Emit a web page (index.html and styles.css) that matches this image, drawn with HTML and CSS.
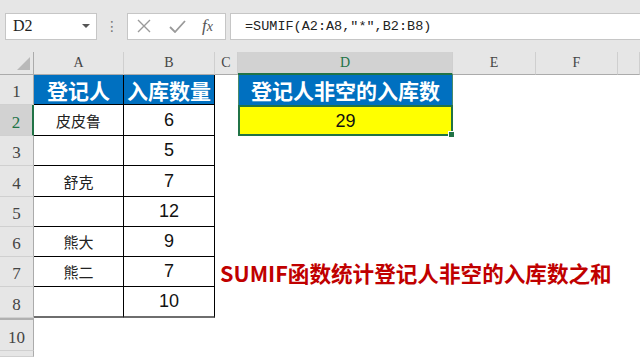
FILE: index.html
```html
<!DOCTYPE html>
<html lang="zh">
<head>
<meta charset="utf-8">
<title>SUMIF</title>
<link rel="stylesheet" href="styles.css">
</head>
<body>
<div class="toolbar">
  <div class="namebox"><span class="ref">D2</span><span class="caret"></span></div>
  <div class="grip">⋮</div>
  <div class="btns">
    <svg class="ico" width="14" height="14" viewBox="0 0 14 14"><path d="M1 1L13 13M13 1L1 13" stroke="#9a9a9a" stroke-width="1.4" fill="none"/></svg>
    <svg class="ico" width="17" height="13" viewBox="0 0 17 13"><path d="M1 7L6 12L16 1" stroke="#9a9a9a" stroke-width="1.8" fill="none"/></svg>
    <span class="fx">f<span class="x">x</span></span>
  </div>
  <div class="formula">=SUMIF(A2:A8,″*″,B2:B8)</div>
</div>
<div class="sheet">
  <div class="corner"><span class="tri"></span></div>
  <div class="ch">A</div><div class="ch">B</div><div class="ch">C</div><div class="ch sel">D</div><div class="ch">E</div><div class="ch">F</div><div class="ch"></div>

  <div class="rh">1</div>
  <div class="c t hd">登记人</div><div class="c t hd">入库数量</div><div class="c"></div><div class="c hd d1">登记人非空的入库数</div><div class="c"></div><div class="c"></div><div class="c"></div>

  <div class="rh rsel">2</div>
  <div class="c t">皮皮鲁</div><div class="c t n">6</div><div class="c"></div><div class="c n d2">29<span class="handle"></span></div><div class="c"></div><div class="c"></div><div class="c"></div>

  <div class="rh">3</div>
  <div class="c t"></div><div class="c t n">5</div><div class="c"></div><div class="c"></div><div class="c"></div><div class="c"></div><div class="c"></div>

  <div class="rh">4</div>
  <div class="c t">舒克</div><div class="c t n">7</div><div class="c"></div><div class="c"></div><div class="c"></div><div class="c"></div><div class="c"></div>

  <div class="rh">5</div>
  <div class="c t"></div><div class="c t n">12</div><div class="c"></div><div class="c"></div><div class="c"></div><div class="c"></div><div class="c"></div>

  <div class="rh">6</div>
  <div class="c t">熊大</div><div class="c t n">9</div><div class="c"></div><div class="c"></div><div class="c"></div><div class="c"></div><div class="c"></div>

  <div class="rh">7</div>
  <div class="c t">熊二</div><div class="c t n">7</div><div class="c note">SUMIF函数统计登记人非空的入库数之和</div>

  <div class="rh">8</div>
  <div class="c t last">&nbsp;</div><div class="c t n last">10</div><div class="c"></div><div class="c"></div><div class="c"></div><div class="c"></div><div class="c"></div>

  <div class="rh hid">10</div>
  <div class="c"></div><div class="c"></div><div class="c"></div><div class="c"></div><div class="c"></div><div class="c"></div><div class="c"></div>

  <div class="rh"></div>
  <div class="c"></div><div class="c"></div><div class="c"></div><div class="c"></div><div class="c"></div><div class="c"></div><div class="c"></div>
</div>
</body>
</html>
```
FILE: styles.css
```css
html, body {
  margin: 0;
  padding: 0;
  background: #ffffff;
  overflow: hidden;
}
body {
  width: 640px;
  height: 357px;
}
.toolbar {
  height: 52px;
  background: #e6e6e6;
  display: flex;
  align-items: center;
  padding-left: 5px;
  box-sizing: border-box;
}
.namebox {
  width: 92px;
  height: 27px;
  box-sizing: border-box;
  background: #fff;
  border: 1px solid #c6c6c6;
  display: flex;
  align-items: center;
  justify-content: space-between;
  padding: 0 6px 0 7px;
}
.ref {
  font-family: "Liberation Serif", serif;
  font-size: 16px;
  color: #222;
}
.caret {
  width: 0;
  height: 0;
  border-left: 4px solid transparent;
  border-right: 4px solid transparent;
  border-top: 4px solid #555;
}
.grip {
  width: 30px;
  text-align: center;
  font-family: "DejaVu Sans", sans-serif;
  font-size: 14px;
  color: #777;
}
.btns {
  width: 99px;
  height: 27px;
  box-sizing: border-box;
  background: #fff;
  border: 1px solid #c6c6c6;
  display: flex;
  align-items: center;
  padding-left: 9px;
  gap: 18px;
}
.ico {
  display: block;
}
.fx {
  font-family: "Liberation Serif", serif;
  font-style: italic;
  font-size: 17px;
  color: #555;
  margin-left: -2px;
}
.fx .x {
  font-size: 14px;
}
.formula {
  flex: 1;
  height: 27px;
  box-sizing: border-box;
  background: #fff;
  border: 1px solid #c6c6c6;
  border-right: none;
  margin-left: 4px;
  padding-left: 14px;
  font-family: "Liberation Mono", monospace;
  font-size: 13.5px;
  line-height: 25px;
  color: #222;
  white-space: nowrap;
}
.sheet {
  display: grid;
  grid-template-columns: 34px 90px 91px 23px 215px 83px 82px 1fr;
  grid-template-rows: 23px 30px 31px 30px 31px 30px 30px 30px 31px 33px 6px;
  overflow: hidden;
}
.corner {
  background: #e6e6e6;
  border-right: 1px solid #ababab;
  border-bottom: 1px solid #ababab;
  box-sizing: border-box;
  position: relative;
}
.tri {
  position: absolute;
  right: 3px;
  bottom: 4px;
  width: 0;
  height: 0;
  border-left: 13px solid transparent;
  border-bottom: 13px solid #b9b9b9;
}
.ch {
  background: #e6e6e6;
  border-right: 1px solid #cfcfcf;
  border-bottom: 1px solid #ababab;
  box-sizing: border-box;
  font-family: "Liberation Serif", serif;
  font-size: 14px;
  color: #444;
  display: flex;
  align-items: center;
  justify-content: center;
}
.ch.sel {
  background: #d2d2d2;
  color: #217346;
  border-bottom: 2px solid #217346;
}
.rh {
  background: #e6e6e6;
  border-right: 1px solid #ababab;
  border-bottom: 1px solid #d0d0d0;
  box-sizing: border-box;
  font-family: "Liberation Serif", serif;
  font-size: 17px;
  color: #444;
  display: flex;
  align-items: flex-end;
  justify-content: center;
  padding-bottom: 2px;
}
.rh.rsel {
  background: #d2d2d2;
  color: #217346;
  border-right: 2px solid #217346;
}
.rh.hid {
  border-top: 2px solid #b0b0b0;
}
.c {
  box-sizing: border-box;
  display: flex;
  align-items: center;
  justify-content: center;
  font-family: "Noto Sans CJK SC", sans-serif;
  font-size: 15px;
  color: #222;
  white-space: nowrap;
}
.c.t {
  border-right: 1px solid #000;
  border-bottom: 1px solid #000;
}
.c.last {
  border-bottom: 2px solid #6e6e6e;
}
.c.n {
  font-family: "Liberation Sans", sans-serif;
  font-size: 18px;
  color: #111;
}
.c.hd {
  background: #0070c0;
  color: #fff;
  font-weight: bold;
  font-size: 21px;
}
.c.d1 {
  border-left: 1px solid #4a8a6a;
  border-right: 1px solid #4a8a6a;
}
.c.d2 {
  background: #ffff00;
  border: 2px solid #217346;
  position: relative;
  padding-top: 1px;
}
.handle {
  position: absolute;
  right: -4px;
  bottom: -4px;
  width: 5px;
  height: 5px;
  background: #217346;
  border: 1px solid #fff;
}
.c.note {
  grid-column: 4 / -1;
  justify-content: flex-start;
  padding-left: 5px;
  color: #c00000;
  font-weight: bold;
  font-size: 21.6px;
}
```
